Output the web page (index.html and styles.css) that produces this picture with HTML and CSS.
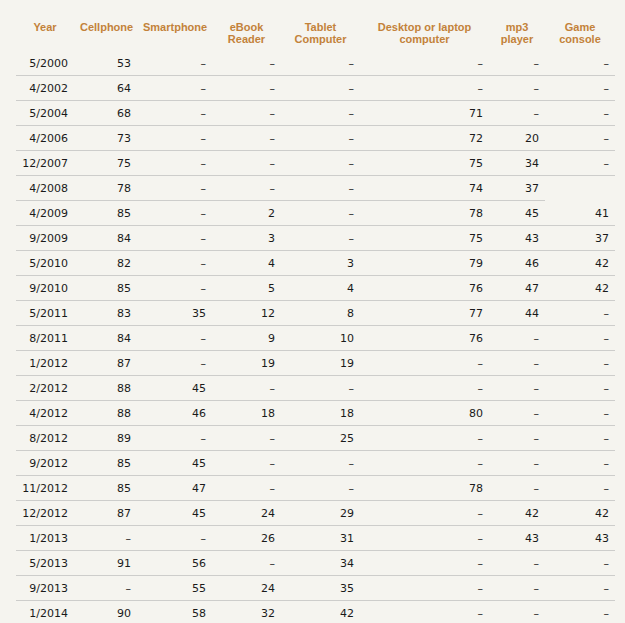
FILE: index.html
```html
<!DOCTYPE html>
<html lang="en">
<head>
<meta charset="utf-8">
<title>Device ownership</title>
<link rel="stylesheet" href="styles.css">
</head>
<body>
<div class="wrap">
<table class="data">
<colgroup>
<col class="c-year"><col class="c-cell"><col class="c-smart"><col class="c-ebook"><col class="c-tablet"><col class="c-desk"><col class="c-mp3"><col class="c-game">
</colgroup>
<thead>
<tr><th>Year</th><th>Cellphone</th><th>Smartphone</th><th>eBook<br>Reader</th><th>Tablet<br>Computer</th><th>Desktop or laptop<br>computer</th><th>mp3<br>player</th><th>Game<br>console</th></tr>
</thead>
<tbody>
<tr><td>5/2000</td><td>53</td><td>–</td><td>–</td><td>–</td><td>–</td><td>–</td><td>–</td></tr>
<tr><td>4/2002</td><td>64</td><td>–</td><td>–</td><td>–</td><td>–</td><td>–</td><td>–</td></tr>
<tr><td>5/2004</td><td>68</td><td>–</td><td>–</td><td>–</td><td>71</td><td>–</td><td>–</td></tr>
<tr><td>4/2006</td><td>73</td><td>–</td><td>–</td><td>–</td><td>72</td><td>20</td><td>–</td></tr>
<tr><td>12/2007</td><td>75</td><td>–</td><td>–</td><td>–</td><td>75</td><td>34</td><td>–</td></tr>
<tr><td>4/2008</td><td>78</td><td>–</td><td>–</td><td>–</td><td>74</td><td>37</td></tr>
<tr><td>4/2009</td><td>85</td><td>–</td><td>2</td><td>–</td><td>78</td><td>45</td><td>41</td></tr>
<tr><td>9/2009</td><td>84</td><td>–</td><td>3</td><td>–</td><td>75</td><td>43</td><td>37</td></tr>
<tr><td>5/2010</td><td>82</td><td>–</td><td>4</td><td>3</td><td>79</td><td>46</td><td>42</td></tr>
<tr><td>9/2010</td><td>85</td><td>–</td><td>5</td><td>4</td><td>76</td><td>47</td><td>42</td></tr>
<tr><td>5/2011</td><td>83</td><td>35</td><td>12</td><td>8</td><td>77</td><td>44</td><td>–</td></tr>
<tr><td>8/2011</td><td>84</td><td>–</td><td>9</td><td>10</td><td>76</td><td>–</td><td>–</td></tr>
<tr><td>1/2012</td><td>87</td><td>–</td><td>19</td><td>19</td><td>–</td><td>–</td><td>–</td></tr>
<tr><td>2/2012</td><td>88</td><td>45</td><td>–</td><td>–</td><td>–</td><td>–</td><td>–</td></tr>
<tr><td>4/2012</td><td>88</td><td>46</td><td>18</td><td>18</td><td>80</td><td>–</td><td>–</td></tr>
<tr><td>8/2012</td><td>89</td><td>–</td><td>–</td><td>25</td><td>–</td><td>–</td><td>–</td></tr>
<tr><td>9/2012</td><td>85</td><td>45</td><td>–</td><td>–</td><td>–</td><td>–</td><td>–</td></tr>
<tr><td>11/2012</td><td>85</td><td>47</td><td>–</td><td>–</td><td>78</td><td>–</td><td>–</td></tr>
<tr><td>12/2012</td><td>87</td><td>45</td><td>24</td><td>29</td><td>–</td><td>42</td><td>42</td></tr>
<tr><td>1/2013</td><td>–</td><td>–</td><td>26</td><td>31</td><td>–</td><td>43</td><td>43</td></tr>
<tr><td>5/2013</td><td>91</td><td>56</td><td>–</td><td>34</td><td>–</td><td>–</td><td>–</td></tr>
<tr><td>9/2013</td><td>–</td><td>55</td><td>24</td><td>35</td><td>–</td><td>–</td><td>–</td></tr>
<tr><td>1/2014</td><td>90</td><td>58</td><td>32</td><td>42</td><td>–</td><td>–</td><td>–</td></tr>
</tbody>
</table>
</div>
</body>
</html>
```
FILE: styles.css
```css
html, body {
  margin: 0;
  padding: 0;
  background: #f5f4ef;
}
.wrap {
  padding: 0 0 0 16px;
}
.data {
  border-collapse: collapse;
  table-layout: fixed;
  width: 599px;
}
.c-year { width: 58px; }
.c-cell { width: 63px; }
.c-smart { width: 75px; }
.c-ebook { width: 69px; }
.c-tablet { width: 79px; }
.c-desk { width: 129px; }
.c-mp3 { width: 56px; }
.c-game { width: 70px; }
.data th {
  font-family: "Liberation Sans", Arial, sans-serif;
  font-weight: bold;
  font-size: 11px;
  line-height: 12px;
  color: #c3823a;
  text-align: center;
  vertical-align: top;
  padding: 21px 6px 6px;
  white-space: nowrap;
}
.data td {
  font-family: "DejaVu Sans", Verdana, sans-serif;
  font-size: 11px;
  line-height: 14px;
  color: #1a1a1a;
  text-align: right;
  padding: 6px 6px 4px;
  border-bottom: 1px solid #cdcdcb;
  white-space: nowrap;
}
```
